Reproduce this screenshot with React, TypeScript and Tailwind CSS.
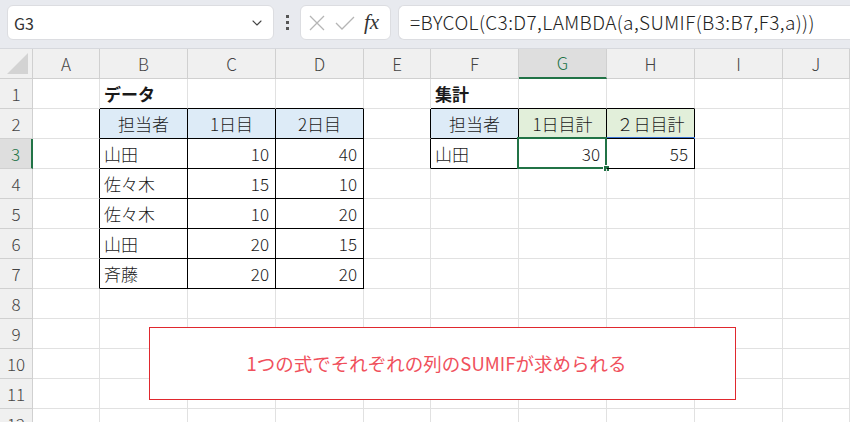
import { ChevronDown } from "lucide-react";

type Cell = { text: string; bold?: boolean; align?: "left" | "right" | "center"; fill?: string };

const cols = ["A", "B", "C", "D", "E", "F", "G", "H", "I", "J"];

const data: Record<string, Cell> = {
  B1: { text: "データ", bold: true },
  F1: { text: "集計", bold: true },
  B2: { text: "担当者", align: "center", fill: "bg-[#ddebf7]" },
  C2: { text: "1日目", align: "center", fill: "bg-[#ddebf7]" },
  D2: { text: "2日目", align: "center", fill: "bg-[#ddebf7]" },
  F2: { text: "担当者", align: "center", fill: "bg-[#ddebf7]" },
  G2: { text: "1日目計", align: "center", fill: "bg-[#e2efda]" },
  H2: { text: "２日目計", align: "center", fill: "bg-[#e2efda]" },
  B3: { text: "山田" },
  C3: { text: "10", align: "right" },
  D3: { text: "40", align: "right" },
  B4: { text: "佐々木" },
  C4: { text: "15", align: "right" },
  D4: { text: "10", align: "right" },
  B5: { text: "佐々木" },
  C5: { text: "10", align: "right" },
  D5: { text: "20", align: "right" },
  B6: { text: "山田" },
  C6: { text: "20", align: "right" },
  D6: { text: "15", align: "right" },
  B7: { text: "斉藤" },
  C7: { text: "20", align: "right" },
  D7: { text: "20", align: "right" },
  F3: { text: "山田" },
  G3: { text: "30", align: "right" },
  H3: { text: "55", align: "right" },
};

const inTable = (c: number, r: number) =>
  (c >= 1 && c <= 3 && r >= 2 && r <= 7) || (c >= 5 && c <= 7 && r >= 2 && r <= 3);

function cellBorders(c: number, r: number) {
  const right = inTable(c, r) || inTable(c + 1, r) ? "border-r-black" : "border-r-[#e1e1e1]";
  const bottom = inTable(c, r) || inTable(c, r + 1) ? "border-b-black" : "border-b-[#e1e1e1]";
  return `${right} ${bottom}`;
}

function TopBar() {
  return (
    <div className="h-[49px] bg-[#e8eaef] border-b border-[#d6d8dd] flex items-start pt-[5px] pl-[7px] gap-0">
      <div className="w-[267px] h-[35px] bg-white rounded-[6px] border border-[#dcdde1] flex items-center pl-[6px] pr-[8px] justify-between">
        <span className="text-[16px] text-[#333]">G3</span>
        <ChevronDown size={16} strokeWidth={1.6} className="text-[#444]" />
      </div>
      <div className="w-[26px] h-[35px] flex flex-col items-center justify-center gap-[3px]">
        <span className="w-[3px] h-[3px] bg-[#555]" />
        <span className="w-[3px] h-[3px] bg-[#555]" />
        <span className="w-[3px] h-[3px] bg-[#555]" />
      </div>
      <div className="w-[91px] h-[35px] bg-white rounded-[6px] border border-[#dcdde1] flex items-center pl-[6px] gap-[8px]">
        <svg width="18" height="18" viewBox="0 0 18 18" className="ml-[1px]">
          <path d="M2 2 L16 16 M16 2 L2 16" stroke="#b5b5b5" strokeWidth="1.3" fill="none" />
        </svg>
        <svg width="22" height="18" viewBox="0 0 22 18">
          <path d="M2 9 L8 15 L20 3" stroke="#b5b5b5" strokeWidth="1.3" fill="none" />
        </svg>
        <span className="font-['Liberation_Serif',serif] italic text-[21px] text-[#333] leading-none">fx</span>
      </div>
      <div className="ml-[7px] flex-1 h-[35px] bg-white rounded-l-[6px] border border-r-0 border-[#dcdde1] flex items-center pl-[11px]">
        <span className="text-[19px] tracking-[0.4px] text-[#222] font-light">=BYCOL(C3:D7,LAMBDA(a,SUMIF(B3:B7,F3,a)))</span>
      </div>
    </div>
  );
}

export default function App() {
  const rows = Array.from({ length: 12 }, (_, i) => i + 1);
  return (
    <div className="w-[850px] h-[422px] overflow-hidden bg-white font-['Noto_Sans_CJK_JP','Noto_Sans',sans-serif] relative">
      <TopBar />
      <div className="grid grid-cols-[33px_67px_88px_88px_88px_67px_88px_88px_88px_88px_1fr] auto-rows-[30px]">
        <div className="bg-[#f0f0f0] border-r border-b border-[#d0d0d0] relative">
          <svg width="22" height="22" viewBox="0 0 22 22" className="absolute right-[3px] bottom-[3px]">
            <path d="M21 0 L21 21 L0 21 Z" fill="#d3d3d3" />
          </svg>
        </div>
        {cols.map((k) =>
          k === "G" ? (
            <div key={k} className="bg-[#dedede] border-r border-r-[#d0d0d0] border-b-2 border-b-[#217346] flex items-center justify-center text-[17px] text-[#217346] font-light">
              {k}
            </div>
          ) : (
            <div key={k} className="bg-[#f0f0f0] border-r border-b border-[#d0d0d0] flex items-center justify-center text-[17px] text-[#444] font-light">
              {k}
            </div>
          )
        )}
        {rows.map((r) => (
          <Row key={r} r={r} />
        ))}
      </div>
      <div className="absolute left-[149px] top-[327px] w-[587px] h-[73px] bg-[#e0282e] p-px">
        <div className="w-full h-full bg-white flex items-center justify-center pr-[12px]">
          <span className="text-[18.5px] text-[#f0505c]">1つの式でそれぞれの列のSUMIFが求められる</span>
        </div>
      </div>
    </div>
  );
}

function Row({ r }: { r: number }) {
  const sel = r === 3;
  return (
    <>
      <div
        className={
          sel
            ? "bg-[#dedede] border-r-2 border-r-[#217346] border-b border-b-[#d0d0d0] flex items-center justify-center text-[17px] text-[#217346] font-light"
            : "bg-[#f0f0f0] border-r border-b border-[#d0d0d0] flex items-center justify-center text-[17px] text-[#444] font-light"
        }
      >
        {r}
      </div>
      {cols.map((k, ci) => {
        const c = ci;
        const d = data[`${k}${r}`];
        const align = d?.align === "right" ? "justify-end pr-[6px]" : d?.align === "center" ? "justify-center" : "justify-start pl-[4px]";
        return (
          <div
            key={k}
            className={`relative border-r border-b ${cellBorders(c, r)} ${d?.fill ?? ""} flex items-center ${align} text-[17px] text-[#1a1a1a] whitespace-nowrap`}
          >
            {d && <span className={d.bold ? "font-bold" : "font-light"}>{d.text}</span>}
            {k === "G" && r === 3 && (
              <>
                <div className="absolute left-[-2px] top-[-2px] w-[178px] h-[32px] border border-[#3b74d6] pointer-events-none" />
                <div className="absolute left-[-2px] top-[-2px] w-[90px] h-[32px] border-2 border-[#217346] pointer-events-none" />
                <div className="absolute right-[-4px] bottom-[-4px] w-[7px] h-[7px] bg-[#217346] border border-white" />
              </>
            )}
          </div>
        );
      })}
    </>
  );
}
